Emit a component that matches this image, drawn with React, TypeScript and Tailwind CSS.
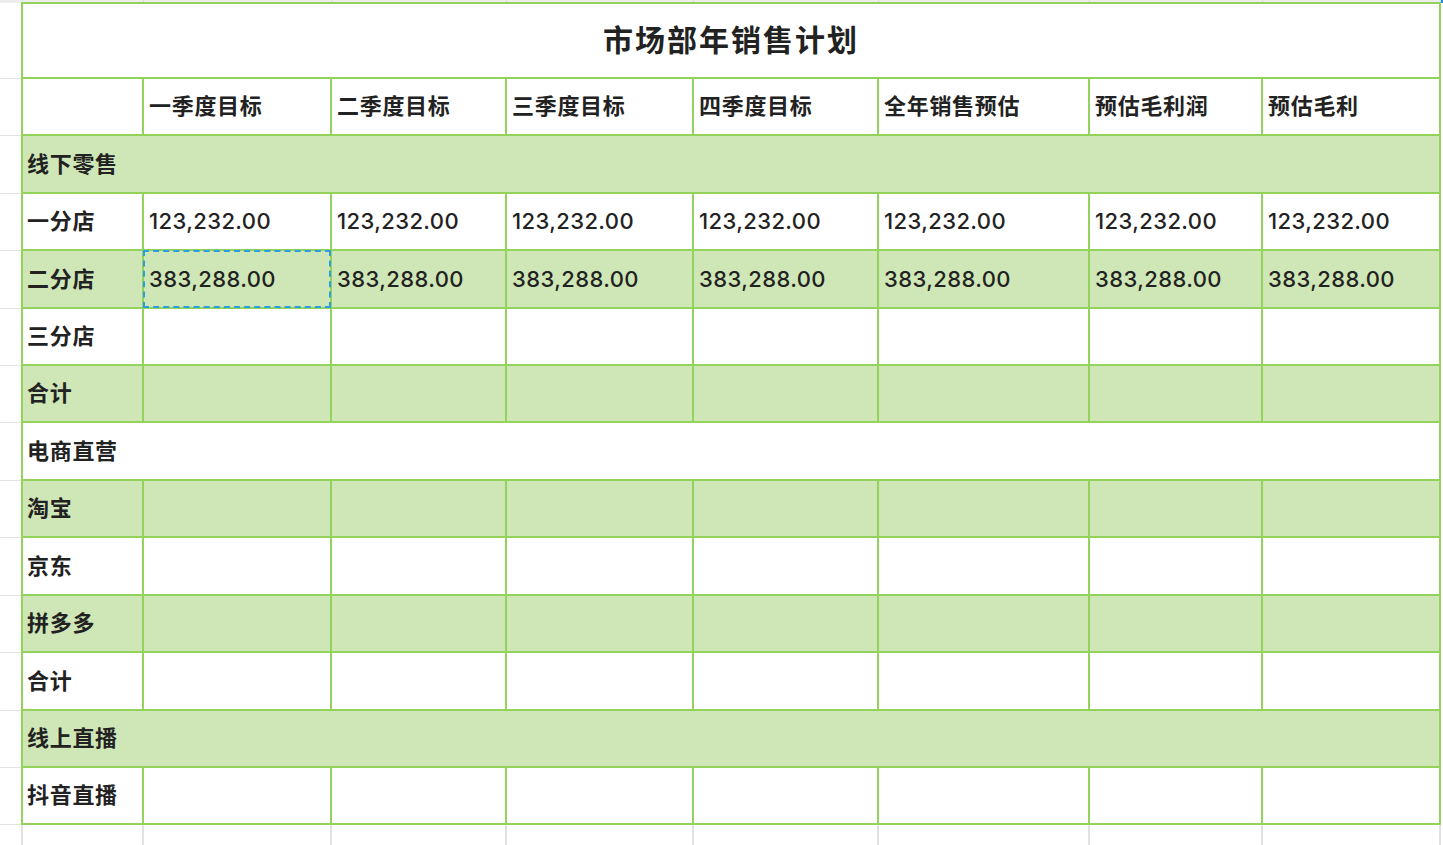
import React from "react";

const widths = [22, 121, 188, 175, 187, 185, 211, 173, 178, 3];
const heights = [57, 58, 57, 58, 57, 57, 58, 57, 58, 57, 58, 57, 57];

type Row = { label: string; span?: boolean; green: boolean; values?: string[] };

const rows: Row[] = [
  { label: "线下零售", span: true, green: true },
  { label: "一分店", green: false, values: Array(7).fill("123,232.00") },
  { label: "二分店", green: true, values: Array(7).fill("383,288.00") },
  { label: "三分店", green: false },
  { label: "合计", green: true },
  { label: "电商直营", span: true, green: false },
  { label: "淘宝", green: true },
  { label: "京东", green: false },
  { label: "拼多多", green: true },
  { label: "合计", green: false },
  { label: "线上直播", span: true, green: true },
  { label: "抖音直播", green: false },
];

const headers = ["一季度目标", "二季度目标", "三季度目标", "四季度目标", "全年销售预估", "预估毛利润", "预估毛利"];

const G = "border-2 border-[#93d35c]";
const gutter = "border-b border-[#e4e4e4] p-0";

export default function App() {
  return (
    <div
      className="w-[1443px] h-[845px] overflow-hidden bg-white text-[#222222]"
      style={{ fontFamily: 'Inter, "Noto Sans CJK SC", sans-serif' }}
    >
      <table className="table-fixed border-collapse w-[1443px]">
        <colgroup>
          {widths.map((w, i) => (
            <col key={i} style={{ width: w }} />
          ))}
        </colgroup>
        <tbody>
          <tr className="h-[3px]">
            {widths.map((_, i) => (
              <td
                key={i}
                className={
                  i === 9
                    ? "p-0 h-[3px] bg-[#1a8cf0]"
                    : "p-0 h-[3px] bg-[#ededed] border-r border-[#dcdcdc]"
                }
              />
            ))}
          </tr>
          <tr>
            <td className={gutter + " h-[75px]"} />
            <td colSpan={8} className={G + " h-[75px] text-center p-0"}>
              <span className="text-[30px] font-bold tracking-[2px]">市场部年销售计划</span>
            </td>
            <td className="p-0" />
          </tr>
          <tr>
            <td className={gutter + " h-[57px]"} />
            <td className={G + " h-[57px] p-0"} />
            {headers.map((h) => (
              <td
                key={h}
                className={G + " h-[57px] pl-[5px] pr-0 py-0 text-[22px] tracking-[0.7px] font-semibold whitespace-nowrap"}
              >
                {h}
              </td>
            ))}
            <td className="p-0" />
          </tr>
          {rows.map((r, ri) => {
            const h = heights[ri + 1];
            const bg = r.green ? "bg-[#cfe7b6]" : "bg-white";
            return (
              <tr key={ri} style={{ height: h }}>
                <td className={gutter} />
                {r.span ? (
                  <td
                    colSpan={8}
                    className={G + " " + bg + " pl-[4px] pr-0 py-0 text-[22px] tracking-[0.7px] font-semibold"}
                  >
                    {r.label}
                  </td>
                ) : (
                  <>
                    <td
                      className={G + " " + bg + " pl-[4px] pr-0 py-0 text-[22px] tracking-[0.7px] font-semibold whitespace-nowrap"}
                    >
                      {r.label}
                    </td>
                    {Array.from({ length: 7 }).map((_, ci) => (
                      <td
                        key={ci}
                        className={G + " " + bg + " relative pl-[5px] pr-0 py-0 text-[22px] tracking-[0.4px] font-medium whitespace-nowrap"}
                      >
                        {r.values ? r.values[ci] : ""}
                        {ri === 2 && ci === 0 && (
                          <div className="absolute inset-[-1px] border-2 border-dashed border-[#2b9ee3]" />
                        )}
                      </td>
                    ))}
                  </>
                )}
                <td className="p-0" />
              </tr>
            );
          })}
          <tr className="h-[30px]">
            {widths.map((_, i) => (
              <td key={i} className={i === 9 ? "p-0" : "p-0 border-r-2 border-[#e2e2e2]"} />
            ))}
          </tr>
        </tbody>
      </table>
    </div>
  );
}
